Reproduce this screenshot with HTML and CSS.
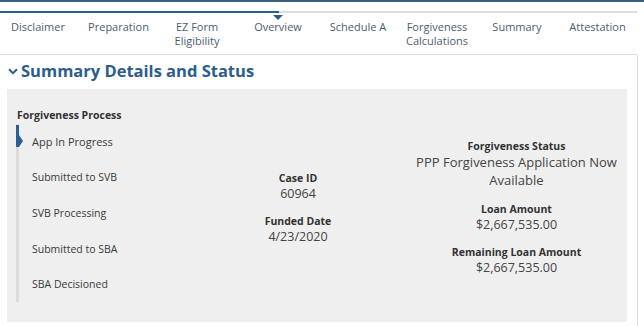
FILE: index.html
```html
<!DOCTYPE html>
<html lang="en">
<head>
<meta charset="utf-8">
<title>Summary Details and Status</title>
<link rel="stylesheet" href="styles.css">
</head>
<body>
<div class="topbar"></div>
<nav class="wizard">
  <div class="track"></div>
  <span class="marker"></span>
  <ul class="tabs">
    <li>Disclaimer</li>
    <li>Preparation</li>
    <li>EZ Form<br>Eligibility</li>
    <li>Overview</li>
    <li>Schedule A</li>
    <li>Forgiveness<br>Calculations</li>
    <li>Summary</li>
    <li>Attestation</li>
  </ul>
</nav>
<main class="card">
  <h1 class="section-title"><svg class="chev" width="10" height="7" viewBox="0 0 10 7"><path d="M1 1.2 L5 5.2 L9 1.2" fill="none" stroke="#2c5d8c" stroke-width="2"/></svg>Summary Details and Status</h1>
  <section class="panel">
    <div class="process">
      <div class="proc-title">Forgiveness Process</div>
      <ol class="steps">
        <li class="step active">App In Progress</li>
        <li class="step">Submitted to SVB</li>
        <li class="step">SVB Processing</li>
        <li class="step">Submitted to SBA</li>
        <li class="step">SBA Decisioned</li>
      </ol>
    </div>
    <div class="col">
      <div class="field">
        <div class="label">Case ID</div>
        <div class="value">60964</div>
      </div>
      <div class="field">
        <div class="label">Funded Date</div>
        <div class="value">4/23/2020</div>
      </div>
    </div>
    <div class="col">
      <div class="field">
        <div class="label">Forgiveness Status</div>
        <div class="value big">PPP Forgiveness Application Now Available</div>
      </div>
      <div class="field">
        <div class="label">Loan Amount</div>
        <div class="value">$2,667,535.00</div>
      </div>
      <div class="field">
        <div class="label">Remaining Loan Amount</div>
        <div class="value">$2,667,535.00</div>
      </div>
    </div>
  </section>
</main>
</body>
</html>
```
FILE: styles.css
```css
* { box-sizing: border-box; }
html, body { margin: 0; padding: 0; background: #fff; }
body {
  font-family: "Open Sans", "Liberation Sans", Arial, sans-serif;
  color: #333;
  width: 644px;
  overflow: hidden;
}
.topbar {
  height: 2px;
  background: #3a5f80;
}
.wizard {
  position: relative;
  width: 637px;
  padding-top: 9px;
}
.track {
  height: 2px;
  background: linear-gradient(to right, #2b5f91 0, #2b5f91 279px, #dcdcdc 279px);
}
.marker {
  position: absolute;
  left: 273px;
  top: 13px;
  width: 0;
  height: 0;
  border-left: 5px solid transparent;
  border-right: 5px solid transparent;
  border-top: 5px solid #2b5f91;
}
.tabs {
  list-style: none;
  margin: 0;
  padding: 7px 0 6px;
  display: grid;
  grid-template-columns: 76px 85px 72px 90px 70px 88px 72px 84px;
  border-bottom: 1px solid #dedede;
}
.tabs li {
  text-align: center;
  font-size: 11px;
  line-height: 14px;
  color: #4a5e70;
  white-space: nowrap;
}
.tabs li:last-child { padding-left: 5px; }
.card {
  width: 638px;
  border-right: 1px solid #dedede;
  padding: 4px 0 0 7px;
  min-height: 280px;
}
.section-title {
  margin: 0 0 7px;
  display: flex;
  align-items: center;
  gap: 3px;
  font-size: 16.5px;
  line-height: 23px;
  font-weight: 700;
  color: #2c5d8c;
}
.chev { margin: 2px 0 0 1px; }
.panel {
  width: 620px;
  background: #efefef;
  display: grid;
  grid-template-columns: 183px 216px 1fr;
  align-items: center;
}
.process {
  align-self: start;
  padding: 19px 0 20px 10px;
}
.proc-title {
  font-size: 10.5px;
  line-height: 14px;
  font-weight: 700;
  color: #333;
  margin-bottom: 2px;
}
.steps {
  list-style: none;
  margin: 0;
  padding: 0;
}
.step {
  position: relative;
  height: 35.6px;
  display: flex;
  align-items: center;
  margin-left: -1px;
  padding-left: 13px;
  border-left: 3px solid #dcdcdc;
  font-size: 10.5px;
  color: #3a3a3a;
}
.step.active { font-size: 11px; }
.step.active::before {
  content: "";
  position: absolute;
  left: -3px;
  top: 1px;
  width: 3px;
  height: 22px;
  background: #2b5f91;
}
.step.active::after {
  content: "";
  position: absolute;
  left: 0;
  top: 11px;
  border-left: 4px solid #2b5f91;
  border-top: 6px solid transparent;
  border-bottom: 6px solid transparent;
}
.col {
  display: flex;
  flex-direction: column;
  gap: 12.5px;
  padding-top: 5px;
  text-align: center;
}
.label {
  font-size: 10.5px;
  line-height: 14px;
  font-weight: 700;
  color: #333;
}
.value {
  font-size: 12.5px;
  line-height: 17px;
  color: #444;
}
.value.big {
  font-size: 13px;
  line-height: 18px;
  padding: 0 6px;
}
```
